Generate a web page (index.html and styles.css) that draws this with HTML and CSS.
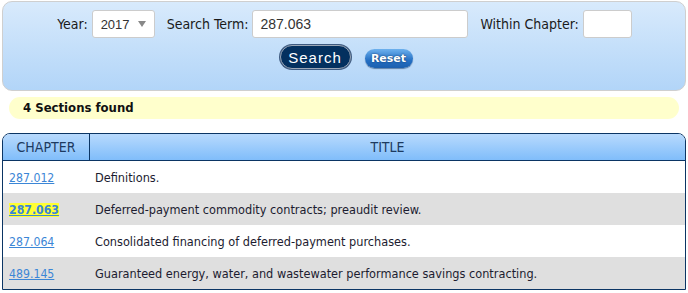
FILE: index.html
```html
<!DOCTYPE html>
<html lang="en">
<head>
    <meta charset="UTF-8">
    <title>Statute Search</title>
    <link rel="stylesheet" href="styles.css">
</head>
<body>

    <!-- Search Form -->
    <form class="search-panel">
        <div class="field-row">
            <label class="field-label">Year:</label>
            <div class="year-select">
                <span>2017</span>
                <span class="arrow"></span>
            </div>
            <label class="field-label gap">Search Term:</label>
            <input class="text-box term-box" type="text" value="287.063">
            <label class="field-label gap">Within Chapter:</label>
            <input class="text-box chapter-box" type="text" value="">
        </div>
        <div class="button-row">
            <button type="button" class="btn-search">Search</button>
            <button type="button" class="btn-reset">Reset</button>
        </div>
    </form>

    <div class="result-count">4 Sections found</div>

    <!-- Results -->
    <table class="results">
        <thead>
            <tr>
                <th class="col-chapter">CHAPTER</th>
                <th class="col-title">TITLE</th>
            </tr>
        </thead>
        <tbody>
            <tr>
                <td class="col-chapter"><a href="#">287.012</a></td>
                <td>Definitions.</td>
            </tr>
            <tr class="alt">
                <td class="col-chapter"><a href="#" class="hit">287.063</a></td>
                <td>Deferred-payment commodity contracts; preaudit review.</td>
            </tr>
            <tr>
                <td class="col-chapter"><a href="#">287.064</a></td>
                <td>Consolidated financing of deferred-payment purchases.</td>
            </tr>
            <tr class="alt">
                <td class="col-chapter"><a href="#">489.145</a></td>
                <td>Guaranteed energy, water, and wastewater performance savings contracting.</td>
            </tr>
        </tbody>
    </table>

</body>
</html>
```

FILE: styles.css
```css
/* Reset */
* { margin: 0; padding: 0; box-sizing: border-box; }

/* Body */
body {
    font-family: "DejaVu Sans Condensed", "DejaVu Sans", sans-serif;
    font-size: 12px;
    color: #1c1c30;
    background: white;
    padding: 1px 2px;
}

/* Search Panel */
.search-panel {
    height: 90px;
    border: 1px solid #cfcfcf;
    border-radius: 10px;
    background: linear-gradient(180deg, #d8eafc, #b2d5f8);
    padding-top: 8px;
}

.field-row {
    display: flex;
    justify-content: center;
    align-items: center;
    padding-left: 1px;
}

.field-label {
    font-size: 14px;
    color: #1a1a1a;
    margin-right: 4px;
}

.field-label.gap {
    margin-left: 12px;
}

.year-select {
    width: 63px;
    height: 28px;
    background: white;
    border: 1px solid #cccccc;
    border-radius: 3px;
    display: flex;
    align-items: center;
    justify-content: space-between;
    padding: 0 8px 0 8px;
    font-family: "Liberation Sans", Arial, sans-serif;
    font-size: 13px;
    color: #333;
}

.arrow {
    width: 0;
    height: 0;
    border-left: 4px solid transparent;
    border-right: 4px solid transparent;
    border-top: 6px solid #888;
}

.text-box {
    height: 28px;
    background: white;
    border: 1px solid #cccccc;
    border-radius: 3px;
    padding: 0 7px;
    font-family: "Liberation Sans", Arial, sans-serif;
    font-size: 14px;
    color: #333;
}

.term-box { width: 216px; }
.chapter-box { width: 49px; }

/* Buttons */
.button-row {
    display: flex;
    justify-content: center;
    align-items: center;
    gap: 14px;
    margin-top: 7px;
    padding-left: 4px;
}

.btn-search {
    width: 71px;
    height: 24px;
    background: #03305f;
    color: white;
    border: 1px solid #9aa6b6;
    border-radius: 12px;
    font-family: "Liberation Sans", Arial, sans-serif;
    font-size: 15px;
    letter-spacing: 1px;
    box-shadow: 0 0 0 1px #3d5a80;
}

.btn-reset {
    width: 48px;
    height: 19px;
    margin-top: 3px;
    background: linear-gradient(180deg, #6db1ee, #2570c4 60%, #1c5fae);
    color: white;
    border: none;
    border-radius: 10px;
    font-family: "DejaVu Sans", Verdana, sans-serif;
    font-weight: bold;
    font-size: 11px;
    text-shadow: 0 0 2px #0a2e5c;
    box-shadow: 0 1px 1px rgba(0, 40, 90, 0.5);
}

/* Result Count */
.result-count {
    margin: 6px 7px 0 7px;
    height: 22px;
    line-height: 22px;
    background: #ffffcc;
    border-radius: 11px;
    padding-left: 14px;
    font-weight: bold;
    font-size: 13px;
    color: #111;
}

/* Results Table */
.results {
    width: 100%;
    margin-top: 14px;
    border-collapse: separate;
    border-spacing: 0;
    border: 1px solid #0b3564;
    border-radius: 8px 8px 0 0;
    overflow: hidden;
}

.results th {
    height: 27px;
    background: linear-gradient(180deg, #b8dafd, #80bdfa);
    color: #1d3a60;
    font-weight: normal;
    font-size: 14px;
    border-bottom: 1px solid #0b3564;
    text-align: center;
}

.results th.col-chapter {
    width: 87px;
    border-right: 1px solid #0b3564;
}

.results td {
    height: 32px;
    padding-left: 5px;
    font-size: 12.6px;
}

.results td.col-chapter {
    padding-left: 6px;
}

.results tr.alt td {
    background: #dfdfdf;
}

.results a {
    color: #3b86d6;
    font-size: 12.2px;
}

.results a.hit {
    background: #ffff33;
    font-weight: bold;
}
```
